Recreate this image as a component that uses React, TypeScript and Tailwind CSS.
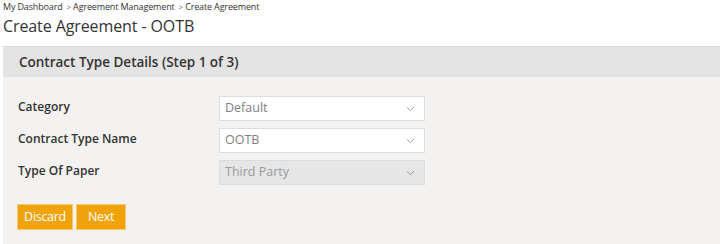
import React from "react";

const Chevron = () => (
  <svg width="9" height="6" viewBox="0 0 9 6" className="shrink-0">
    <path d="M1 1.2 L4.5 4.6 L8 1.2" fill="none" stroke="#9a9a9a" strokeWidth="1" />
  </svg>
);

function Select({ value, disabled }: { value: string; disabled?: boolean }) {
  return (
    <div
      className={`w-[206px] h-[25px] flex items-center justify-between pl-[5px] pr-[9px] border ${
        disabled ? "bg-[#e6e6e6] border-[#dcdcdc] text-[#9a9a9a]" : "bg-white border-[#dcdcdc] text-[#808080]"
      } text-[12.5px]`}
    >
      <span>{value}</span>
      <Chevron />
    </div>
  );
}

function Row({ label, value, disabled }: { label: string; value: string; disabled?: boolean }) {
  return (
    <div className="flex items-center">
      <div className="w-[201px] text-[12px] font-semibold text-[#333] -mt-[4px]">{label}</div>
      <Select value={value} disabled={disabled} />
    </div>
  );
}

export default function App() {
  return (
    <div
      className="w-[720px] h-[244px] bg-white overflow-hidden"
      style={{ fontFamily: '"Open Sans", "Noto Sans", sans-serif' }}
    >
      <div className="pl-[3px] pt-[0px] h-[14px] text-[9px] text-[#333] leading-[14px] tracking-[-0.15px]">
        My Dashboard <span className="text-[#666] text-[7.5px] ml-[2px]">&gt;</span> Agreement Management{" "}
        <span className="text-[#666] text-[7.5px] ml-[2px]">&gt;</span> Create Agreement
      </div>
      <div className="pl-[3px] h-[30px] text-[16px] text-[#333] leading-[24px] font-normal tracking-[-0.1px]">Create Agreement - OOTB</div>
      <div className="ml-[3px] mt-[2px]">
        <div className="h-[31px] bg-[#e5e4e5] border-t border-[#d8d8d8] flex items-center pl-[16px] text-[13.5px] font-semibold text-[#333]">
          Contract Type Details (Step 1 of 3)
        </div>
        <div className="bg-[#f3f2f1] h-[167px] pt-[19px] pl-[15px]">
          <div className="flex flex-col gap-[7px]">
            <Row label="Category" value="Default" />
            <Row label="Contract Type Name" value="OOTB" />
            <Row label="Type Of Paper" value="Third Party" disabled />
          </div>
          <div className="flex gap-[3px] mt-[19px] ml-[-1px]">
            <button className="h-[26px] w-[56px] bg-[#f0a30a] border border-[#f6c873] text-white text-[12.5px] tracking-[-0.3px]">
              Discard
            </button>
            <button className="h-[26px] w-[50px] bg-[#f0a30a] border border-[#f6c873] text-white text-[12.5px] tracking-[-0.3px]">
              Next
            </button>
          </div>
        </div>
      </div>
    </div>
  );
}
